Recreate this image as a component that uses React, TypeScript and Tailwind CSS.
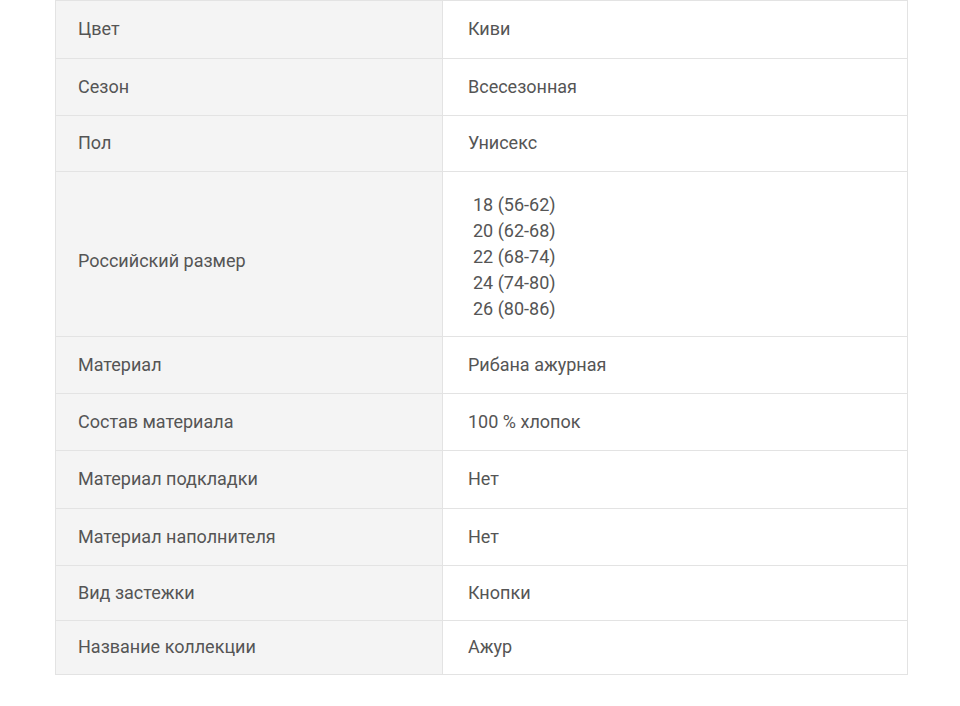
const rows: { label: string; value: string | string[]; h: string }[] = [
  { label: "Цвет", value: "Киви", h: "h-[57px]" },
  { label: "Сезон", value: "Всесезонная", h: "h-[57px]" },
  { label: "Пол", value: "Унисекс", h: "h-[56px]" },
  {
    label: "Российский размер",
    value: ["18 (56-62)", "20 (62-68)", "22 (68-74)", "24 (74-80)", "26 (80-86)"],
    h: "h-[165px]",
  },
  { label: "Материал", value: "Рибана ажурная", h: "h-[57px]" },
  { label: "Состав материала", value: "100 % хлопок", h: "h-[57px]" },
  { label: "Материал подкладки", value: "Нет", h: "h-[58px]" },
  { label: "Материал наполнителя", value: "Нет", h: "h-[57px]" },
  { label: "Вид застежки", value: "Кнопки", h: "h-[55px]" },
  { label: "Название коллекции", value: "Ажур", h: "h-[54px]" },
];

export default function App() {
  return (
    <div className="w-[960px] h-[706px] bg-white pl-[55px] font-['Roboto',sans-serif] text-[18px] text-[#555555]">
      <div className="w-[853px] border border-[#e3e3e3]">
        {rows.map((r, i) => {
          const list = Array.isArray(r.value);
          return (
            <div
              key={r.label}
              className={`flex ${r.h} ${i > 0 ? "border-t border-[#e3e3e3]" : ""}`}
            >
              <div
                className={`w-[387px] shrink-0 bg-[#f4f4f4] border-r border-[#e3e3e3] flex items-center pl-[22px] ${
                  list ? "pt-[12px]" : "pb-[2px]"
                }`}
              >
                {r.label}
              </div>
              <div className="flex-1 flex items-center pl-[25px] pb-[2px]">
                {Array.isArray(r.value) ? (
                  <div className="pl-[5px] leading-[26px] pt-[8px]">
                    {r.value.map((v) => (
                      <div key={v}>{v}</div>
                    ))}
                  </div>
                ) : (
                  r.value
                )}
              </div>
            </div>
          );
        })}
      </div>
    </div>
  );
}
